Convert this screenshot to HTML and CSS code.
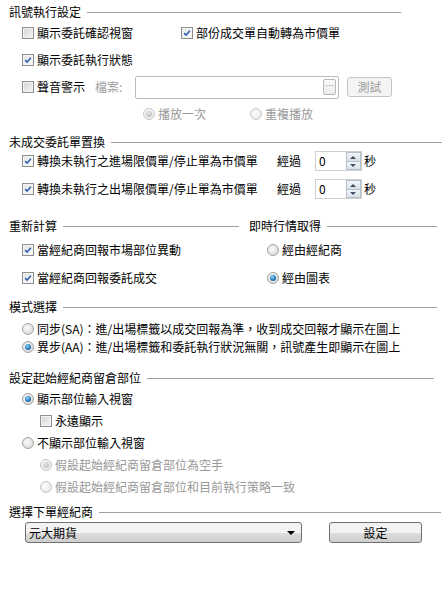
FILE: index.html
```html
<!DOCTYPE html>
<html lang="zh-Hant">
<head>
    <meta charset="UTF-8">
    <meta name="viewport" content="width=device-width, initial-scale=1.0">
    <title>訊號執行設定</title>
    <link rel="stylesheet" href="styles.css">
</head>
<body>
    <section class="group g-signal">
        <div class="group-head"><span>訊號執行設定</span><i class="rule"></i></div>
        <div class="rows">
            <div class="row">
                <label class="chk col-confirm"><span class="box"></span>顯示委託確認視窗</label>
                <label class="chk"><span class="box on"><svg viewBox="0 0 12 12"><path d="M2.6 6.2 L4.9 8.6 L9.4 3.2"/></svg></span>部份成交單自動轉為市價單</label>
            </div>
            <div class="row">
                <label class="chk"><span class="box on"><svg viewBox="0 0 12 12"><path d="M2.6 6.2 L4.9 8.6 L9.4 3.2"/></svg></span>顯示委託執行狀態</label>
            </div>
            <div class="row">
                <label class="chk col-sound"><span class="box"></span>聲音警示</label>
                <span class="muted file-label">檔案:</span>
                <span class="file"><span class="browse">…</span></span>
                <span class="btn btn-off">測試</span>
            </div>
            <div class="row row-play">
                <label class="rad off col-once"><span class="dot on"></span>播放一次</label>
                <label class="rad off"><span class="dot"></span>重複播放</label>
            </div>
        </div>
    </section>

    <section class="group g-replace">
        <div class="group-head"><span>未成交委託單置換</span><i class="rule"></i></div>
        <div class="rows">
            <div class="row">
                <label class="chk col-convert"><span class="box on"><svg viewBox="0 0 12 12"><path d="M2.6 6.2 L4.9 8.6 L9.4 3.2"/></svg></span>轉換未執行之進場限價單/停止單為市價單</label>
                <span class="after">經過</span>
                <span class="spin"><span class="spin-val">0</span><span class="spin-btns"><i class="up"></i><i class="down"></i></span></span>
                <span>秒</span>
            </div>
            <div class="row">
                <label class="chk col-convert"><span class="box on"><svg viewBox="0 0 12 12"><path d="M2.6 6.2 L4.9 8.6 L9.4 3.2"/></svg></span>轉換未執行之出場限價單/停止單為市價單</label>
                <span class="after">經過</span>
                <span class="spin"><span class="spin-val">0</span><span class="spin-btns"><i class="up"></i><i class="down"></i></span></span>
                <span>秒</span>
            </div>
        </div>
    </section>

    <div class="split">
        <section class="group g-recalc">
            <div class="group-head"><span>重新計算</span><i class="rule"></i></div>
            <div class="rows">
                <div class="row">
                    <label class="chk"><span class="box on"><svg viewBox="0 0 12 12"><path d="M2.6 6.2 L4.9 8.6 L9.4 3.2"/></svg></span>當經紀商回報市場部位異動</label>
                </div>
                <div class="row">
                    <label class="chk"><span class="box on"><svg viewBox="0 0 12 12"><path d="M2.6 6.2 L4.9 8.6 L9.4 3.2"/></svg></span>當經紀商回報委託成交</label>
                </div>
            </div>
        </section>
        <section class="group g-quote">
            <div class="group-head"><span>即時行情取得</span><i class="rule"></i></div>
            <div class="rows">
                <div class="row">
                    <label class="rad"><span class="dot"></span>經由經紀商</label>
                </div>
                <div class="row">
                    <label class="rad"><span class="dot on"></span>經由圖表</label>
                </div>
            </div>
        </section>
    </div>

    <section class="group g-mode">
        <div class="group-head"><span>模式選擇</span><i class="rule"></i></div>
        <div class="rows">
            <div class="row">
                <label class="rad"><span class="dot"></span>同步(SA)：進/出場標籤以成交回報為準，收到成交回報才顯示在圖上</label>
            </div>
            <div class="row">
                <label class="rad"><span class="dot on"></span>異步(AA)：進/出場標籤和委託執行狀況無關，訊號產生即顯示在圖上</label>
            </div>
        </div>
    </section>

    <section class="group g-position">
        <div class="group-head"><span>設定起始經紀商留倉部位</span><i class="rule"></i></div>
        <div class="rows">
            <div class="row">
                <label class="rad"><span class="dot on"></span>顯示部位輸入視窗</label>
            </div>
            <div class="row sub">
                <label class="chk"><span class="box"></span>永遠顯示</label>
            </div>
            <div class="row">
                <label class="rad"><span class="dot"></span>不顯示部位輸入視窗</label>
            </div>
            <div class="row sub">
                <label class="rad off"><span class="dot on"></span>假設起始經紀商留倉部位為空手</label>
            </div>
            <div class="row sub">
                <label class="rad off"><span class="dot"></span>假設起始經紀商留倉部位和目前執行策略一致</label>
            </div>
        </div>
    </section>

    <section class="group g-broker">
        <div class="group-head"><span>選擇下單經紀商</span><i class="rule"></i></div>
        <div class="rows">
            <div class="row row-broker">
                <span class="select">元大期貨<i class="caret"></i></span>
                <span class="btn btn-set">設定</span>
            </div>
        </div>
    </section>
</body>
</html>
```

FILE: styles.css
```css
body {
    font-family: "Noto Sans CJK TC", "Noto Sans", sans-serif;
    font-size: 12px;
    line-height: 14px;
    color: #000;
    background: #fff;
    margin: 0;
    padding: 5px 0 0 9px;
}
label {
    cursor: default;
}
.group-head {
    display: flex;
    align-items: center;
    height: 14px;
    white-space: nowrap;
}
.rule {
    flex: 1;
    height: 0;
    margin-left: 6px;
    border-top: 1px solid #a0a0a0;
}
.rows {
    display: flex;
    flex-direction: column;
    gap: 7px;
    margin-top: 4px;
    padding-left: 13px;
}
.row {
    display: flex;
    align-items: center;
    height: 20px;
    white-space: nowrap;
}
.row.sub {
    padding-left: 18px;
}
.muted {
    color: #a0a0a0;
}

/* sections */
.g-signal {
    width: 392px;
}
.g-replace {
    width: 433px;
    margin-top: 11px;
}
.g-replace .rows {
    gap: 8px;
    margin-top: 2px;
}
.split {
    display: flex;
    gap: 10px;
    margin-top: 20px;
}
.g-recalc {
    width: 230px;
}
.g-quote {
    width: 188px;
}
.g-quote .rows {
    padding-left: 18px;
}
.split .rows {
    gap: 8px;
    margin-top: 7px;
}
.g-mode {
    width: 428px;
    margin-top: 12px;
}
.g-mode .rows {
    gap: 0;
    margin-top: 6px;
}
.g-mode .row {
    height: 18px;
}
.g-position {
    width: 425px;
    margin-top: 15px;
}
.g-position .rows {
    gap: 2px;
    margin-top: 4px;
}
.g-broker {
    width: 432px;
    margin-top: 8px;
}
.g-broker .rows {
    margin-top: 3px;
    padding-left: 16px;
}

/* checkbox */
.chk, .rad {
    display: inline-flex;
    align-items: center;
}
.box {
    box-sizing: border-box;
    width: 12px;
    height: 12px;
    margin-right: 3px;
    border: 1px solid #8e8f8f;
    box-shadow: inset 0 0 0 1px #f3f3f3;
    background: linear-gradient(135deg, #d4d4d4, #f6f6f6);
    display: inline-flex;
}
.box.on {
    background: linear-gradient(135deg, #e4e4e4, #fbfbfb);
}
.box svg {
    width: 10px;
    height: 10px;
}
.box path {
    fill: none;
    stroke: #2c5fb0;
    stroke-width: 1.9;
}

/* radio */
.dot {
    position: relative;
    box-sizing: border-box;
    width: 12px;
    height: 12px;
    margin-right: 3px;
    border: 1px solid #a2a2a2;
    border-radius: 50%;
    background: radial-gradient(circle at 40% 40%, #fafafa, #d4d4d4);
}
.dot.on::after {
    content: "";
    position: absolute;
    left: 2px;
    top: 2px;
    width: 6px;
    height: 6px;
    border-radius: 50%;
    background: radial-gradient(circle at 40% 35%, #8fd6f5, #2a7cc0 55%, #123f75);
}
.rad.off {
    color: #999;
}
.rad.off .dot {
    border-color: #c8c8c8;
    background: radial-gradient(circle at 40% 40%, #fcfcfc, #e4e4e4);
}
.rad.off .dot.on::after {
    background: radial-gradient(circle at 40% 35%, #e8e8e8, #b0b0b0);
}

/* sound row */
.col-confirm {
    width: 159px;
}
.col-sound {
    width: 73px;
}
.file-label {
    width: 40px;
}
.file {
    box-sizing: border-box;
    display: flex;
    justify-content: flex-end;
    align-items: center;
    width: 204px;
    height: 23px;
    padding-right: 2px;
    border: 1px solid #bcbcbc;
    border-radius: 2px;
    background: #fff;
}
.browse {
    box-sizing: border-box;
    width: 13px;
    height: 16px;
    border: 1px solid #b8b8b8;
    border-radius: 2px;
    background: linear-gradient(#fafafa, #ebebeb);
    color: #8a8a8a;
    font-size: 9px;
    line-height: 12px;
    text-align: center;
}
.btn {
    box-sizing: border-box;
    display: inline-flex;
    align-items: center;
    justify-content: center;
    border-radius: 3px;
}
.btn-off {
    width: 45px;
    height: 20px;
    margin-left: 8px;
    color: #9c9c9c;
    border: 1px solid #c4c4c4;
    background: #f4f4f4;
}
.row-play {
    padding-left: 121px;
}
.col-once {
    width: 107px;
}

/* spin rows */
.col-convert {
    width: 255px;
}
.after {
    width: 38px;
}
.spin {
    box-sizing: border-box;
    display: flex;
    width: 47px;
    height: 20px;
    margin-right: 2px;
    border: 1px solid #cfcfcf;
}
.spin-val {
    flex: 1;
    padding-left: 3px;
    line-height: 18px;
}
.spin-btns {
    display: flex;
    flex-direction: column;
    width: 15px;
}
.spin-btns i {
    position: relative;
    flex: 1;
    border: 1px solid #b5c0cb;
    background: linear-gradient(#f3f6f9, #d8e0e8);
}
.spin-btns i + i {
    border-top: 0;
}
.spin-btns i::after {
    content: "";
    position: absolute;
    left: 3px;
    top: 3px;
    border-left: 3px solid transparent;
    border-right: 3px solid transparent;
}
.spin-btns .up::after {
    border-bottom: 3px solid #3d4f62;
}
.spin-btns .down::after {
    top: 2px;
    border-top: 3px solid #3d4f62;
}

/* broker */
.row-broker {
    height: 21px;
}
.select {
    position: relative;
    box-sizing: border-box;
    display: flex;
    align-items: center;
    width: 277px;
    height: 21px;
    padding-left: 3px;
    border: 1px solid #707070;
    border-radius: 3px;
    background: linear-gradient(#f2f2f2 50%, #dddddd 50%, #cfcfcf);
}
.caret {
    position: absolute;
    right: 6px;
    top: 8px;
    border-left: 4px solid transparent;
    border-right: 4px solid transparent;
    border-top: 4px solid #000;
}
.btn-set {
    width: 93px;
    height: 21px;
    margin-left: 27px;
    border: 1px solid #707070;
    background: linear-gradient(#f2f2f2 50%, #dddddd 50%, #cfcfcf);
}
```
